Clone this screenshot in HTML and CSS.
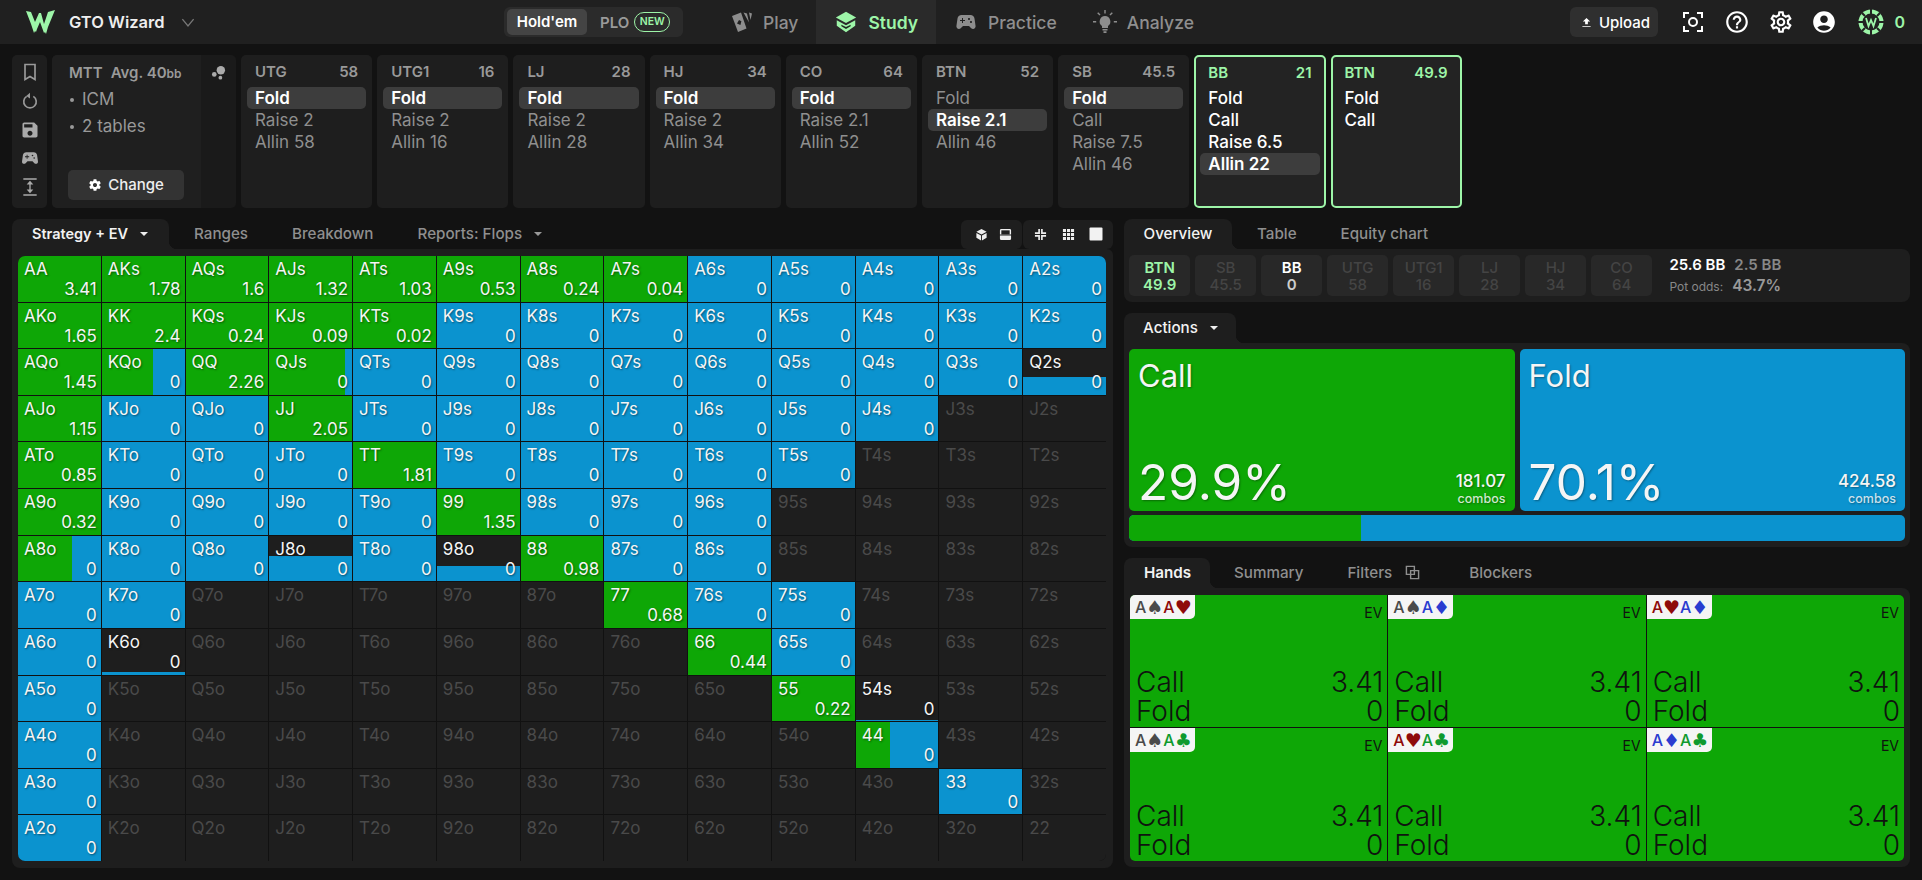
FILE: index.html
```html
<!DOCTYPE html>
<html lang="en">
<head>
<meta charset="utf-8">
<title>GTO Wizard</title>
<link rel="stylesheet" href="styles.css">
</head>
<body>
<header class="topbar">
  <div class="brand">
    <svg class="logo" viewBox="0 0 30 24"><path fill="#9df5a8" d="M0 1l5 1 4 10 4-9 2 0 3 11 4-12 7-2-7 17-2 7-1-2-1 1-4-11-3 7-1 3-1-1-1 2-3-9z"/></svg>
    <span class="brand-name">GTO Wizard</span>
    <svg class="chev" viewBox="0 0 12 8"><path fill="none" stroke="#777" stroke-width="1.2" d="M1 1l5 6 5-6"/></svg>
  </div>
  <div class="switch">
    <span class="switch-on">Hold'em</span>
    <span class="switch-off">PLO</span>
    <span class="new">NEW</span>
  </div>
  <nav class="nav">
    <a class="nav-item">
      <svg class="nav-ico" viewBox="0 0 24 24"><path fill="#8d8d8d" d="M3 6l9-3.500 5.500 16L9 22zM10 10l-2 3.500 3.400 1.500 1-3.800z"/><path fill="#8d8d8d" d="M14.500 2.500l3.500 1 2 9zM20 2.500l3 1-1.500 6.500z"/></svg>
      Play
    </a>
    <a class="nav-item nav-active">
      <svg class="nav-ico" viewBox="0 0 26 24"><path fill="#9df5a8" d="M13 1l11 6-11 6L2 7z"/><path fill="#9df5a8" d="M3 10l10 5.500L23 10v6l-10 7-10-7z"/><path fill="#1f2a20" d="M13 17.500l5-2.500v1.500l-5 3-5-3V15z"/></svg>
      Study
    </a>
    <a class="nav-item">
      <svg class="nav-ico" viewBox="0 0 24 24"><path fill="#8d8d8d" d="M21.580 16.090l-1.090-7.660C20.210 6.460 18.520 5 16.530 5H7.470C5.480 5 3.790 6.460 3.510 8.430l-1.090 7.660C2.200 17.630 3.390 19 4.940 19c.68 0 1.320-.27 1.800-.75L9 16h6l2.250 2.250c.48.48 1.130.75 1.800.75 1.560 0 2.750-1.370 2.530-2.910zM11 11H9v2H8v-2H6v-1h2V8h1v2h2v1zm4-1c-.55 0-1-.45-1-1s.45-1 1-1 1 .45 1 1-.45 1-1 1zm2 3c-.55 0-1-.45-1-1s.45-1 1-1 1 .45 1 1-.45 1-1 1z"/></svg>
      Practice
    </a>
    <a class="nav-item">
      <svg class="nav-ico" viewBox="0 0 24 24"><path fill="#8d8d8d" d="M12 6a5.500 5.500 0 0 0-3 10v2h6v-2a5.500 5.500 0 0 0-3-10zM9.500 19h5v1.500h-5zM10.500 21.200h3V23h-3zM11.300 0h1.400v3.500h-1.400zM0 11h3.200v1.400H0zM20.800 11H24v1.400h-3.200zM4.200 3.200l1-1 2.300 2.400-1 1zM19.800 3.200l-1-1-2.300 2.400 1 1z"/></svg>
      Analyze
    </a>
  </nav>
  <div class="tools">
    <button class="upload">
      <svg class="upload-ico" viewBox="0 0 12 12"><path fill="#fff" d="M6 1l4 4H7.500v3h-3V5H2zM1.500 10h9v1h-9z"/></svg>
      Upload
    </button>
    <svg class="tool-ico scan" viewBox="0 0 24 24"><path fill="none" stroke="#fff" stroke-width="2" d="M8 3H3v5M16 3h5v5M8 21H3v-5M16 21h5v-5"/><circle cx="12" cy="12" r="4" fill="none" stroke="#fff" stroke-width="2"/></svg>
    <svg class="tool-ico help" viewBox="0 0 24 24"><path fill="#fff" d="M11 18h2v-2h-2v2zm1-16C6.480 2 2 6.480 2 12s4.480 10 10 10 10-4.480 10-10S17.520 2 12 2zm0 18c-4.410 0-8-3.590-8-8s3.590-8 8-8 8 3.590 8 8-3.590 8-8 8zm0-14c-2.210 0-4 1.790-4 4h2c0-1.100.9-2 2-2s2 .9 2 2c0 2-3 1.750-3 5h2c0-2.250 3-2.500 3-5 0-2.210-1.790-4-4-4z"/></svg>
    <svg class="tool-ico gear" viewBox="0 0 24 24"><path fill="#fff" d="M19.430 12.980c.04-.32.07-.64.07-.98 0-.34-.03-.66-.07-.98l2.110-1.650c.19-.15.24-.42.12-.64l-2-3.460c-.09-.16-.26-.25-.44-.25-.06 0-.12.01-.17.03l-2.490 1c-.52-.4-1.080-.73-1.690-.98l-.38-2.650C14.460 2.180 14.250 2 14 2h-4c-.25 0-.46.18-.49.42l-.38 2.650c-.61.25-1.170.59-1.690.98l-2.490-1c-.06-.02-.12-.03-.18-.03-.17 0-.34.09-.43.25l-2 3.460c-.13.22-.07.49.12.64l2.110 1.650c-.04.32-.07.65-.07.98 0 .33.03.66.07.98l-2.110 1.650c-.19.15-.24.42-.12.64l2 3.460c.09.16.26.25.44.25.06 0 .12-.01.17-.03l2.490-1c.52.4 1.080.73 1.690.98l.38 2.650c.03.24.24.42.49.42h4c.25 0 .46-.18.49-.42l.38-2.650c.61-.25 1.170-.59 1.690-.98l2.490 1c.06.02.12.03.18.03.17 0 .34-.09.43-.25l2-3.460c.12-.22.07-.49-.12-.64l-2.110-1.650zm-1.980-1.710c.04.31.05.52.05.73 0 .21-.02.43-.05.73l-.14 1.130.89.7 1.080.84-.7 1.210-1.270-.51-1.040-.42-.9.68c-.43.32-.84.56-1.250.73l-1.060.43-.16 1.130-.2 1.350h-1.400l-.19-1.350-.16-1.130-1.060-.43c-.43-.18-.83-.41-1.230-.71l-.91-.7-1.060.43-1.270.51-.7-1.210 1.080-.84.89-.7-.14-1.130c-.03-.31-.05-.54-.05-.74s.02-.43.05-.73l.14-1.130-.89-.7-1.080-.84.7-1.210 1.270.51 1.040.42.9-.68c.43-.32.84-.56 1.250-.73l1.060-.43.16-1.130.2-1.350h1.390l.19 1.350.16 1.130 1.060.43c.43.18.83.41 1.230.71l.91.7 1.060-.43 1.270-.51.7 1.210-1.070.85-.89.7.14 1.130zM12 8c-2.210 0-4 1.790-4 4s1.790 4 4 4 4-1.790 4-4-1.790-4-4-4zm0 6c-1.100 0-2-.9-2-2s.9-2 2-2 2 .9 2 2-.9 2-2 2z"/></svg>
    <svg class="tool-ico user" viewBox="0 0 24 24"><path fill="#fff" d="M12 2C6.480 2 2 6.480 2 12s4.480 10 10 10 10-4.480 10-10S17.520 2 12 2zm0 4c1.930 0 3.500 1.570 3.500 3.500S13.930 13 12 13s-3.500-1.570-3.500-3.500S10.070 6 12 6zm0 14c-2.030 0-4.430-.82-6.140-2.880C7.550 15.800 9.680 15 12 15s4.450.8 6.140 2.120C16.430 19.180 14.030 20 12 20z"/></svg>
    <svg class="chip" viewBox="0 0 26 26"><circle cx="13" cy="13" r="12.500" fill="#9df5a8"/><circle cx="13" cy="13" r="8.500" fill="#222"/><path fill="none" stroke="#222" stroke-width="2" d="M13 0v5M13 21v5M0 13h5M21 13h5M4 4l3 3M19 19l3 3M22 4l-3 3M4 22l3-3"/><path fill="none" stroke="#9df5a8" stroke-width="1.800" d="M8 9l2.500 8L13 11l2.500 6L18 9"/></svg>
    <span class="coins">0</span>
  </div>
</header>

<section class="strip">
  <aside class="side">
    <svg class="side-ico" viewBox="0 0 24 24"><path fill="none" stroke="#999" stroke-width="2" d="M6 3h12v18l-6-3.500L6 21z"/></svg>
    <svg class="side-ico" viewBox="0 0 24 24"><path fill="none" stroke="#999" stroke-width="2" d="M8 6.500a7.500 7.500 0 1 0 8 0"/><path fill="#999" d="M12 2v7L7.500 6z"/></svg>
    <svg class="side-ico" viewBox="0 0 24 24"><path fill="#aaa" d="M17 3H5c-1.110 0-2 .9-2 2v14c0 1.100.89 2 2 2h14c1.100 0 2-.9 2-2V7l-4-4zm-5 16c-1.660 0-3-1.340-3-3s1.340-3 3-3 3 1.340 3 3-1.340 3-3 3zm3-10H5V5h10v4z"/></svg>
    <svg class="side-ico" viewBox="0 0 24 24"><path fill="#aaa" d="M21.580 16.090l-1.090-7.660C20.210 6.460 18.520 5 16.530 5H7.470C5.480 5 3.790 6.460 3.510 8.430l-1.090 7.660C2.200 17.630 3.390 19 4.940 19c.68 0 1.320-.27 1.800-.75L9 16h6l2.250 2.250c.48.48 1.130.75 1.800.75 1.560 0 2.750-1.370 2.530-2.910zM11 11H9v2H8v-2H6v-1h2V8h1v2h2v1zm4-1c-.55 0-1-.45-1-1s.45-1 1-1 1 .45 1 1-.45 1-1 1zm2 3c-.55 0-1-.45-1-1s.45-1 1-1 1 .45 1 1-.45 1-1 1z"/></svg>
    <svg class="side-ico" viewBox="0 0 24 24"><path fill="#aaa" d="M4 1.500h16v1.800H4zM4 20.700h16v1.800H4zM11.200 9H8l4-4.500L16 9h-3.200v6H16l-4 4.500L8 15h3.200z"/></svg>
  </aside>
  <div class="format">
    <div class="format-main">
      <div class="format-title"><span>MTT</span><span>Avg. 40<small>bb</small></span></div>
      <ul class="format-list"><li>ICM</li><li>2 tables</li></ul>
      <button class="change">
        <svg class="change-ico" viewBox="0 0 24 24"><path fill="#fff" d="M19.430 12.980c.04-.32.07-.64.07-.98s-.03-.66-.07-.98l2.110-1.650c.19-.15.24-.42.12-.64l-2-3.460c-.12-.22-.39-.3-.61-.22l-2.490 1c-.52-.4-1.080-.73-1.690-.98l-.38-2.650A.49.49 0 0 0 14 2h-4c-.25 0-.46.18-.49.42l-.38 2.650c-.61.25-1.170.59-1.690.98l-2.490-1c-.23-.09-.49 0-.61.22l-2 3.460c-.13.22-.07.49.12.64l2.110 1.650c-.04.32-.07.65-.07.98s.03.66.07.98l-2.110 1.650c-.19.15-.24.42-.12.64l2 3.460c.12.22.39.3.61.22l2.490-1c.52.4 1.080.73 1.690.98l.38 2.650c.03.24.24.42.49.42h4c.25 0 .46-.18.49-.42l.38-2.650c.61-.25 1.170-.59 1.690-.98l2.490 1c.23.09.49 0 .61-.22l2-3.460c.12-.22.07-.49-.12-.64l-2.110-1.650zM12 15.500c-1.930 0-3.500-1.570-3.500-3.500s1.570-3.500 3.500-3.500 3.500 1.570 3.500 3.500-1.570 3.500-3.500 3.500z"/></svg>
        Change
      </button>
    </div>
    <div class="format-extra">
      <svg class="dots" viewBox="0 0 16 16"><circle cx="10.500" cy="5.500" r="4.500" fill="#aaa"/><circle cx="3.500" cy="10" r="2.500" fill="#aaa"/><circle cx="10" cy="13.500" r="2" fill="#aaa"/></svg>
    </div>
  </div>
  <div class="pos"><div class="pos-head"><span>UTG</span><span>58</span></div><div class="opt sel">Fold</div><div class="opt">Raise 2</div><div class="opt">Allin 58</div></div>
  <div class="pos"><div class="pos-head"><span>UTG1</span><span>16</span></div><div class="opt sel">Fold</div><div class="opt">Raise 2</div><div class="opt">Allin 16</div></div>
  <div class="pos"><div class="pos-head"><span>LJ</span><span>28</span></div><div class="opt sel">Fold</div><div class="opt">Raise 2</div><div class="opt">Allin 28</div></div>
  <div class="pos"><div class="pos-head"><span>HJ</span><span>34</span></div><div class="opt sel">Fold</div><div class="opt">Raise 2</div><div class="opt">Allin 34</div></div>
  <div class="pos"><div class="pos-head"><span>CO</span><span>64</span></div><div class="opt sel">Fold</div><div class="opt">Raise 2.1</div><div class="opt">Allin 52</div></div>
  <div class="pos"><div class="pos-head"><span>BTN</span><span>52</span></div><div class="opt">Fold</div><div class="opt sel">Raise 2.1</div><div class="opt">Allin 46</div></div>
  <div class="pos"><div class="pos-head"><span>SB</span><span>45.5</span></div><div class="opt sel">Fold</div><div class="opt">Call</div><div class="opt">Raise 7.5</div><div class="opt">Allin 46</div></div>
  <div class="pos pos-live"><div class="pos-head"><span>BB</span><span>21</span></div><div class="opt">Fold</div><div class="opt">Call</div><div class="opt">Raise 6.5</div><div class="opt sel">Allin 22</div></div>
  <div class="pos pos-live"><div class="pos-head"><span>BTN</span><span>49.9</span></div><div class="opt">Fold</div><div class="opt">Call</div></div>
</section>

<main class="main">
  <section class="left">
    <div class="tabs">
      <span class="tab tab-on tab-strategy">Strategy + EV <i class="caret"></i></span>
      <span class="tab">Ranges</span>
      <span class="tab">Breakdown</span>
      <span class="tab">Reports: Flops <i class="caret caret-dim"></i></span>
      <div class="views">
        <div class="view-group">
          <svg class="view-ico" viewBox="0 0 14 14"><path fill="#eee" d="M7 1l5.500 3L7 7 1.500 4zM1.500 5.300L6.500 8v5.500l-5-3zM12.500 5.300L7.500 8v5.500l5-3z"/></svg>
          <svg class="view-ico" viewBox="0 0 14 14"><path fill="#eee" d="M2.500 1h9A1.500 1.500 0 0 1 13 2.500V7H1V2.500A1.500 1.500 0 0 1 2.500 1zM1 8h12v3.500a1.500 1.500 0 0 1-1.500 1.500h-9A1.500 1.500 0 0 1 1 11.500z"/><path fill="#1e1e1e" d="M2.500 2.500h9V7h-9z"/></svg>
        </div>
        <div class="view-group view-group-b">
          <svg class="view-ico" viewBox="0 0 14 14"><path fill="none" stroke="#eee" stroke-width="1.800" d="M5.500 1v4.500H1M8.500 1v4.500H13M5.500 13V8.500H1M8.500 13V8.500H13"/></svg>
          <svg class="view-ico" viewBox="0 0 14 14"><path fill="#eee" d="M1 1h3.300v3.300H1zM5.400 1h3.300v3.300H5.400zM9.700 1H13v3.300H9.700zM1 5.400h3.300v3.300H1zM5.400 5.400h3.300v3.300H5.400zM9.700 5.400H13v3.300H9.700zM1 9.700h3.300V13H1zM5.400 9.700h3.300V13H5.400zM9.700 9.700H13V13H9.700z"/></svg>
          <svg class="view-ico view-square" viewBox="0 0 14 14"><rect x="0.500" y="0.500" width="13" height="13" rx="1" fill="#f2f2f2"/></svg>
        </div>
      </div>
    </div>
    <div class="matrix-panel">
      <div class="matrix">
        <div class="c g"><span class="l">AA</span><span class="v">3.41</span></div><div class="c g"><span class="l">AKs</span><span class="v">1.78</span></div><div class="c g"><span class="l">AQs</span><span class="v">1.6</span></div><div class="c g"><span class="l">AJs</span><span class="v">1.32</span></div><div class="c g"><span class="l">ATs</span><span class="v">1.03</span></div><div class="c g"><span class="l">A9s</span><span class="v">0.53</span></div><div class="c g"><span class="l">A8s</span><span class="v">0.24</span></div><div class="c g"><span class="l">A7s</span><span class="v">0.04</span></div><div class="c b"><span class="l">A6s</span><span class="v">0</span></div><div class="c b"><span class="l">A5s</span><span class="v">0</span></div><div class="c b"><span class="l">A4s</span><span class="v">0</span></div><div class="c b"><span class="l">A3s</span><span class="v">0</span></div><div class="c b"><span class="l">A2s</span><span class="v">0</span></div>
        <div class="c g"><span class="l">AKo</span><span class="v">1.65</span></div><div class="c g"><span class="l">KK</span><span class="v">2.4</span></div><div class="c g"><span class="l">KQs</span><span class="v">0.24</span></div><div class="c g"><span class="l">KJs</span><span class="v">0.09</span></div><div class="c g"><span class="l">KTs</span><span class="v">0.02</span></div><div class="c b"><span class="l">K9s</span><span class="v">0</span></div><div class="c b"><span class="l">K8s</span><span class="v">0</span></div><div class="c b"><span class="l">K7s</span><span class="v">0</span></div><div class="c b"><span class="l">K6s</span><span class="v">0</span></div><div class="c b"><span class="l">K5s</span><span class="v">0</span></div><div class="c b"><span class="l">K4s</span><span class="v">0</span></div><div class="c b"><span class="l">K3s</span><span class="v">0</span></div><div class="c b"><span class="l">K2s</span><span class="v">0</span></div>
        <div class="c g"><span class="l">AQo</span><span class="v">1.45</span></div><div class="c b"><span class="fill-g" style="width:62%"></span><span class="l">KQo</span><span class="v">0</span></div><div class="c g"><span class="l">QQ</span><span class="v">2.26</span></div><div class="c b"><span class="fill-g" style="width:91%"></span><span class="l">QJs</span><span class="v">0</span></div><div class="c b"><span class="l">QTs</span><span class="v">0</span></div><div class="c b"><span class="l">Q9s</span><span class="v">0</span></div><div class="c b"><span class="l">Q8s</span><span class="v">0</span></div><div class="c b"><span class="l">Q7s</span><span class="v">0</span></div><div class="c b"><span class="l">Q6s</span><span class="v">0</span></div><div class="c b"><span class="l">Q5s</span><span class="v">0</span></div><div class="c b"><span class="l">Q4s</span><span class="v">0</span></div><div class="c b"><span class="l">Q3s</span><span class="v">0</span></div><div class="c m"><span class="fill-b" style="height:40%"></span><span class="l">Q2s</span><span class="v">0</span></div>
        <div class="c g"><span class="l">AJo</span><span class="v">1.15</span></div><div class="c b"><span class="l">KJo</span><span class="v">0</span></div><div class="c b"><span class="l">QJo</span><span class="v">0</span></div><div class="c g"><span class="l">JJ</span><span class="v">2.05</span></div><div class="c b"><span class="l">JTs</span><span class="v">0</span></div><div class="c b"><span class="l">J9s</span><span class="v">0</span></div><div class="c b"><span class="l">J8s</span><span class="v">0</span></div><div class="c b"><span class="l">J7s</span><span class="v">0</span></div><div class="c b"><span class="l">J6s</span><span class="v">0</span></div><div class="c b"><span class="l">J5s</span><span class="v">0</span></div><div class="c b"><span class="l">J4s</span><span class="v">0</span></div><div class="c"><span class="l">J3s</span></div><div class="c"><span class="l">J2s</span></div>
        <div class="c g"><span class="l">ATo</span><span class="v">0.85</span></div><div class="c b"><span class="l">KTo</span><span class="v">0</span></div><div class="c b"><span class="l">QTo</span><span class="v">0</span></div><div class="c b"><span class="l">JTo</span><span class="v">0</span></div><div class="c g"><span class="l">TT</span><span class="v">1.81</span></div><div class="c b"><span class="l">T9s</span><span class="v">0</span></div><div class="c b"><span class="l">T8s</span><span class="v">0</span></div><div class="c b"><span class="l">T7s</span><span class="v">0</span></div><div class="c b"><span class="l">T6s</span><span class="v">0</span></div><div class="c b"><span class="l">T5s</span><span class="v">0</span></div><div class="c"><span class="l">T4s</span></div><div class="c"><span class="l">T3s</span></div><div class="c"><span class="l">T2s</span></div>
        <div class="c g"><span class="l">A9o</span><span class="v">0.32</span></div><div class="c b"><span class="l">K9o</span><span class="v">0</span></div><div class="c b"><span class="l">Q9o</span><span class="v">0</span></div><div class="c b"><span class="l">J9o</span><span class="v">0</span></div><div class="c b"><span class="l">T9o</span><span class="v">0</span></div><div class="c g"><span class="l">99</span><span class="v">1.35</span></div><div class="c b"><span class="l">98s</span><span class="v">0</span></div><div class="c b"><span class="l">97s</span><span class="v">0</span></div><div class="c b"><span class="l">96s</span><span class="v">0</span></div><div class="c"><span class="l">95s</span></div><div class="c"><span class="l">94s</span></div><div class="c"><span class="l">93s</span></div><div class="c"><span class="l">92s</span></div>
        <div class="c b"><span class="fill-g" style="width:65%"></span><span class="l">A8o</span><span class="v">0</span></div><div class="c b"><span class="l">K8o</span><span class="v">0</span></div><div class="c b"><span class="l">Q8o</span><span class="v">0</span></div><div class="c m"><span class="fill-b" style="height:56%"></span><span class="l">J8o</span><span class="v">0</span></div><div class="c b"><span class="l">T8o</span><span class="v">0</span></div><div class="c m"><span class="fill-b" style="height:33%"></span><span class="l">98o</span><span class="v">0</span></div><div class="c g"><span class="l">88</span><span class="v">0.98</span></div><div class="c b"><span class="l">87s</span><span class="v">0</span></div><div class="c b"><span class="l">86s</span><span class="v">0</span></div><div class="c"><span class="l">85s</span></div><div class="c"><span class="l">84s</span></div><div class="c"><span class="l">83s</span></div><div class="c"><span class="l">82s</span></div>
        <div class="c b"><span class="l">A7o</span><span class="v">0</span></div><div class="c b"><span class="l">K7o</span><span class="v">0</span></div><div class="c"><span class="l">Q7o</span></div><div class="c"><span class="l">J7o</span></div><div class="c"><span class="l">T7o</span></div><div class="c"><span class="l">97o</span></div><div class="c"><span class="l">87o</span></div><div class="c g"><span class="l">77</span><span class="v">0.68</span></div><div class="c b"><span class="l">76s</span><span class="v">0</span></div><div class="c b"><span class="l">75s</span><span class="v">0</span></div><div class="c"><span class="l">74s</span></div><div class="c"><span class="l">73s</span></div><div class="c"><span class="l">72s</span></div>
        <div class="c b"><span class="l">A6o</span><span class="v">0</span></div><div class="c m"><span class="fill-b" style="height:6%"></span><span class="l">K6o</span><span class="v">0</span></div><div class="c"><span class="l">Q6o</span></div><div class="c"><span class="l">J6o</span></div><div class="c"><span class="l">T6o</span></div><div class="c"><span class="l">96o</span></div><div class="c"><span class="l">86o</span></div><div class="c"><span class="l">76o</span></div><div class="c g"><span class="l">66</span><span class="v">0.44</span></div><div class="c b"><span class="l">65s</span><span class="v">0</span></div><div class="c"><span class="l">64s</span></div><div class="c"><span class="l">63s</span></div><div class="c"><span class="l">62s</span></div>
        <div class="c b"><span class="l">A5o</span><span class="v">0</span></div><div class="c"><span class="l">K5o</span></div><div class="c"><span class="l">Q5o</span></div><div class="c"><span class="l">J5o</span></div><div class="c"><span class="l">T5o</span></div><div class="c"><span class="l">95o</span></div><div class="c"><span class="l">85o</span></div><div class="c"><span class="l">75o</span></div><div class="c"><span class="l">65o</span></div><div class="c g"><span class="l">55</span><span class="v">0.22</span></div><div class="c m"><span class="fill-b" style="height:3%"></span><span class="l">54s</span><span class="v">0</span></div><div class="c"><span class="l">53s</span></div><div class="c"><span class="l">52s</span></div>
        <div class="c b"><span class="l">A4o</span><span class="v">0</span></div><div class="c"><span class="l">K4o</span></div><div class="c"><span class="l">Q4o</span></div><div class="c"><span class="l">J4o</span></div><div class="c"><span class="l">T4o</span></div><div class="c"><span class="l">94o</span></div><div class="c"><span class="l">84o</span></div><div class="c"><span class="l">74o</span></div><div class="c"><span class="l">64o</span></div><div class="c"><span class="l">54o</span></div><div class="c b"><span class="fill-g" style="width:42%"></span><span class="l">44</span><span class="v">0</span></div><div class="c"><span class="l">43s</span></div><div class="c"><span class="l">42s</span></div>
        <div class="c b"><span class="l">A3o</span><span class="v">0</span></div><div class="c"><span class="l">K3o</span></div><div class="c"><span class="l">Q3o</span></div><div class="c"><span class="l">J3o</span></div><div class="c"><span class="l">T3o</span></div><div class="c"><span class="l">93o</span></div><div class="c"><span class="l">83o</span></div><div class="c"><span class="l">73o</span></div><div class="c"><span class="l">63o</span></div><div class="c"><span class="l">53o</span></div><div class="c"><span class="l">43o</span></div><div class="c b"><span class="l">33</span><span class="v">0</span></div><div class="c"><span class="l">32s</span></div>
        <div class="c b"><span class="l">A2o</span><span class="v">0</span></div><div class="c"><span class="l">K2o</span></div><div class="c"><span class="l">Q2o</span></div><div class="c"><span class="l">J2o</span></div><div class="c"><span class="l">T2o</span></div><div class="c"><span class="l">92o</span></div><div class="c"><span class="l">82o</span></div><div class="c"><span class="l">72o</span></div><div class="c"><span class="l">62o</span></div><div class="c"><span class="l">52o</span></div><div class="c"><span class="l">42o</span></div><div class="c"><span class="l">32o</span></div><div class="c"><span class="l">22</span></div>
      </div>
    </div>
  </section>

  <section class="right">
    <div class="tabs">
      <span class="tab tab-on tab-overview">Overview</span>
      <span class="tab">Table</span>
      <span class="tab">Equity chart</span>
    </div>
    <div class="seats">
      <div class="seat seat-live"><span>BTN</span><span>49.9</span></div>
      <div class="seat"><span>SB</span><span>45.5</span></div>
      <div class="seat seat-bb"><span>BB</span><span>0</span></div>
      <div class="seat"><span>UTG</span><span>58</span></div>
      <div class="seat"><span>UTG1</span><span>16</span></div>
      <div class="seat"><span>LJ</span><span>28</span></div>
      <div class="seat"><span>HJ</span><span>34</span></div>
      <div class="seat"><span>CO</span><span>64</span></div>
      <div class="pot">
        <div class="pot-top"><b>25.6 BB</b><span>2.5 BB</span></div>
        <div class="pot-odds"><span>Pot odds:</span><b>43.7%</b></div>
      </div>
    </div>
    <div class="tabs tabs-gap">
      <span class="tab tab-on tab-actions">Actions <i class="caret"></i></span>
    </div>
    <div class="actions">
      <div class="action-row">
        <div class="action a-call">
          <div class="a-name">Call</div>
          <div class="a-foot"><span class="a-pct">29.9%</span><span class="a-combos"><b>181.07</b><small>combos</small></span></div>
        </div>
        <div class="action a-fold">
          <div class="a-name">Fold</div>
          <div class="a-foot"><span class="a-pct">70.1%</span><span class="a-combos"><b>424.58</b><small>combos</small></span></div>
        </div>
      </div>
      <div class="split"><span class="split-g" style="width:29.9%"></span></div>
    </div>
    <div class="tabs tabs-gap">
      <span class="tab tab-on tab-hands">Hands</span>
      <span class="tab">Summary</span>
      <span class="tab tab-filters">Filters<svg class="filter-ico" viewBox="0 0 16 16"><path fill="none" stroke="#8f8f8f" stroke-width="1.500" d="M1.500 1.500h8.500v8.500H1.500zM6 6h8.500v8.500H6z"/></svg></span>
      <span class="tab">Blockers</span>
    </div>
    <div class="hands-panel">
      <div class="hands">
        <div class="hand">
          <div class="hand-top"><div class="tag"><span class="s">A<i class="suit">♠</i></span><span class="h">A<i class="suit">♥</i></span></div><span class="ev">EV</span></div>
          <div class="hand-row"><span>Call</span><span>3.41</span></div><div class="hand-row"><span>Fold</span><span>0</span></div>
        </div>
        <div class="hand">
          <div class="hand-top"><div class="tag"><span class="s">A<i class="suit">♠</i></span><span class="d">A<i class="suit">♦</i></span></div><span class="ev">EV</span></div>
          <div class="hand-row"><span>Call</span><span>3.41</span></div><div class="hand-row"><span>Fold</span><span>0</span></div>
        </div>
        <div class="hand">
          <div class="hand-top"><div class="tag"><span class="h">A<i class="suit">♥</i></span><span class="d">A<i class="suit">♦</i></span></div><span class="ev">EV</span></div>
          <div class="hand-row"><span>Call</span><span>3.41</span></div><div class="hand-row"><span>Fold</span><span>0</span></div>
        </div>
        <div class="hand">
          <div class="hand-top"><div class="tag"><span class="s">A<i class="suit">♠</i></span><span class="k">A<i class="suit">♣</i></span></div><span class="ev">EV</span></div>
          <div class="hand-row"><span>Call</span><span>3.41</span></div><div class="hand-row"><span>Fold</span><span>0</span></div>
        </div>
        <div class="hand">
          <div class="hand-top"><div class="tag"><span class="h">A<i class="suit">♥</i></span><span class="k">A<i class="suit">♣</i></span></div><span class="ev">EV</span></div>
          <div class="hand-row"><span>Call</span><span>3.41</span></div><div class="hand-row"><span>Fold</span><span>0</span></div>
        </div>
        <div class="hand">
          <div class="hand-top"><div class="tag"><span class="d">A<i class="suit">♦</i></span><span class="k">A<i class="suit">♣</i></span></div><span class="ev">EV</span></div>
          <div class="hand-row"><span>Call</span><span>3.41</span></div><div class="hand-row"><span>Fold</span><span>0</span></div>
        </div>
      </div>
    </div>
  </section>
</main>
</body>
</html>
```

FILE: styles.css
```css
* { box-sizing: border-box; }
html, body { margin: 0; height: 100%; }
body {
  background: #121212;
  color: #fff;
  font-family: Inter, "Noto Sans", sans-serif;
  overflow: hidden;
  width: 1922px;
  height: 880px;
}
button { font: inherit; border: 0; color: inherit; }

/* top bar */
.topbar { display: flex; align-items: center; height: 44px; padding-right: 17px; background: #202020; }
.brand { display: flex; align-items: center; width: 504px; padding-left: 26px; }
.logo { width: 30px; height: 24px; }
.brand-name { margin-left: 13px; font-size: 16.500px; font-weight: 600; color: #eee; }
.chev { width: 14px; height: 9px; margin-left: 16px; }
.switch { display: flex; align-items: center; width: 179px; height: 30px; padding: 0 3px; background: #2b2b2b; border-radius: 6px; font-size: 15px; font-weight: 600; }
.switch-on { width: 80px; height: 26px; line-height: 26px; text-align: center; background: #444; border-radius: 5px; color: #fff; }
.switch-off { margin-left: 13px; color: #9a9a9a; }
.new { margin-left: 5px; width: 36px; height: 20px; line-height: 18px; text-align: center; border: 1px solid #9df5a8; border-radius: 10px; color: #9df5a8; font-size: 10.500px; }
.nav { display: flex; height: 44px; margin-left: 28px; }
.nav-item { display: flex; align-items: center; gap: 10px; padding: 0 18px; font-size: 17.500px; font-weight: 500; color: #8f8f8f; }
.nav-active { background: #2a2a2a; color: #9df5a8; font-weight: 600; }
.nav-ico { width: 24px; height: 24px; }
.tools { display: flex; align-items: center; margin-left: auto; }
.upload { display: flex; align-items: center; gap: 7px; width: 88px; height: 30px; padding-left: 11px; background: #2f2f2f; border-radius: 6px; font-size: 15px; font-weight: 500; }
.upload-ico { width: 11px; height: 11px; }
.tool-ico { width: 24px; height: 24px; }
.scan { margin-left: 23px; }
.help { margin-left: 19px; width: 26px; height: 26px; }
.gear { margin-left: 18px; width: 26px; height: 26px; }
.user { margin-left: 17px; width: 26px; height: 26px; }
.chip { width: 26px; height: 26px; margin-left: 21.500px; }
.coins { margin-left: 10px; font-size: 16px; font-weight: 600; color: #9df5a8; }

/* action strip */
.strip { display: flex; gap: 5px; height: 153px; margin: 11px 0 0 12px; }
.side { display: flex; flex-direction: column; justify-content: space-between; align-items: center; width: 35px; padding: 7px 0 11px; background: #1e1e1e; border-radius: 5px; }
.side-ico { width: 20px; height: 20px; }
.format { display: flex; width: 184px; background: #1a1a1a; border-radius: 5px; overflow: hidden; }
.format-main { position: relative; display: flex; flex-direction: column; width: 149px; padding-left: 17px; background: #1f1f1f; }
.format-title { display: flex; gap: 8px; margin-top: 9px; font-size: 15px; line-height: 17px; font-weight: 600; color: #9a9a9a; white-space: nowrap; }
.format-title small { font-size: 12px; }
.format-list { list-style: none; margin: 4px 0 0; padding: 0; font-size: 17px; color: #999; }
.format-list li { height: 27px; line-height: 27px; padding-left: 13px; position: relative; }
.format-list li::before { content: ""; position: absolute; left: 1px; top: 12px; width: 4px; height: 4px; border-radius: 50%; background: #999; }
.change { display: flex; align-items: center; justify-content: center; gap: 6px; width: 116px; height: 30px; margin: auto 0 8px -1px; background: #333; border-radius: 5px; font-size: 15px; font-weight: 500; color: #eee; padding: 0 0 1px; }
.change-ico { width: 14px; height: 14px; }
.format-extra { flex: 1; display: flex; justify-content: center; padding-top: 10px; }
.dots { width: 15px; height: 15px; }
.pos { width: 131.200px; padding: 0 6px; background: #1e1e1e; border-radius: 5px; font-size: 17px; color: #8f8f8f; }
.pos-head { display: flex; justify-content: space-between; height: 32px; line-height: 34px; padding: 0 8px; font-size: 15px; font-weight: 600; color: #999; }
.opt { height: 22px; line-height: 22px; padding: 0 8px; border-radius: 5px; }
.opt.sel { background: #3d3d3d; color: #fff; font-weight: 600; }
.pos-live { background: #232323; border: 2px solid #9df5a8; color: #fff; font-weight: 500; padding: 0 4px; }
.pos-live .pos-head { color: #9df5a8; height: 30px; line-height: 32px; }

/* main */
.main { display: flex; margin: 11px 0 0 12px; }
.left { width: 1101px; }
.right { width: 786px; margin-left: 11px; }
.tabs { position: relative; display: flex; height: 30px; align-items: center; }
.tabs-gap { margin-top: 11px; }
.tab { position: relative; height: 30px; line-height: 30px; padding: 0 22px; font-size: 15.200px; font-weight: 500; color: #8f8f8f; white-space: nowrap; }
.tab-on { background: #1e1e1e; border-radius: 8px 8px 0 0; color: #f2f2f2; }
.tab-on::after { content: ""; position: absolute; right: -8px; bottom: 0; width: 8px; height: 8px; background: radial-gradient(circle at 100% 0, transparent 8px, #1e1e1e 8.500px); }
.tab-strategy { width: 157px; padding: 0 0 0 20px; font-size: 14.500px; font-weight: 600; margin-right: 3px; }
.tab-overview { width: 108px; padding: 0 0 0 19.500px; margin-right: 3px; }
.tab-actions { width: 112px; padding: 0 0 0 19px; }
.tab-hands { width: 86px; padding: 0 0 0 20px; font-weight: 600; margin-right: 2px; }
.tab-filters { padding-right: 27px; }
.caret { display: inline-block; margin: 0 0 2px 8px; border: 4.500px solid transparent; border-top-color: #eee; border-bottom: 0; vertical-align: middle; }
.caret-dim { border-top-color: #999; }
.filter-ico { width: 15px; height: 15px; margin-left: 13px; vertical-align: -2px; }
.views { display: flex; gap: 1px; margin-left: auto; }
.view-group { display: flex; align-items: center; justify-content: space-between; width: 61px; height: 29px; padding: 0 10px 0 14px; background: #1e1e1e; border-radius: 6px; }
.view-group-b { width: 90px; padding: 0 10px 0 11px; }
.view-ico { width: 13px; height: 13px; }
.view-square { width: 14px; height: 14px; }

/* matrix */
.matrix-panel { height: 619px; padding: 7px 7px 7px 6px; background: #1e1e1e; border-radius: 0 6px 8px 8px; }
.matrix { display: grid; grid-template-columns: repeat(13, 1fr); grid-template-rows: repeat(13, 1fr); gap: 1px; height: 605px; background: #111; border-radius: 7px; overflow: hidden; }
.c { position: relative; display: flex; flex-direction: column; background: #1e1e1e; padding-top: 3px; font-size: 17px; line-height: 21px; color: #4a4a4a; overflow: hidden; }
.l, .v { position: relative; }
.l { padding-left: 6px; }
.v { align-self: flex-end; padding-right: 4px; margin-top: -1px; }
.g, .b, .m { color: #f5f5f5; text-shadow: 1px 1px 2px rgba(0, 0, 0, .45); }
.g { background: #0ea706; }
.b { background: #0b93cf; }
.m { background: #1e1e1e; }
.fill-g, .fill-b { position: absolute; left: 0; }
.fill-g { top: 0; bottom: 0; background: #0ea706; }
.fill-b { right: 0; bottom: 0; background: #0b93cf; }

/* overview */
.seats { display: flex; align-items: center; gap: 4.600px; height: 53px; padding-left: 5px; background: #1e1e1e; border-radius: 0 8px 8px 8px; }
.seat { display: flex; flex-direction: column; align-items: center; justify-content: center; width: 61.400px; height: 41px; background: #282828; border-radius: 5px; font-size: 15px; line-height: 17px; font-weight: 500; color: #444; }
.seat-live { color: #9df5a8; font-weight: 600; }
.seat-bb { color: #fff; font-weight: 600; }
.seat-bb span:last-child { color: #ccc; }
.pot { margin-left: 12.500px; }
.pot-top { display: flex; gap: 9px; font-size: 15px; line-height: 17px; font-weight: 600; color: #888; }
.pot-top b { color: #fff; font-weight: 600; }
.pot-odds { display: flex; align-items: baseline; gap: 9px; margin-top: 4px; font-size: 12px; line-height: 17px; color: #888; }
.pot-odds b { font-size: 15.500px; font-weight: 600; color: #999; }

/* actions */
.actions { height: 204px; padding: 6px 5px; background: #1e1e1e; border-radius: 0 8px 8px 8px; }
.action-row { display: flex; gap: 5px; height: 162px; }
.action { flex: 1; display: flex; flex-direction: column; justify-content: space-between; padding: 8px 9px 5px 9px; border-radius: 5px; text-shadow: 1px 1px 2px rgba(0, 0, 0, .35); }
.a-call { background: #0ea706; }
.a-fold { background: #0b93cf; }
.a-name { font-size: 31px; line-height: 38px; color: #f5f5f5; }
.a-foot { display: flex; justify-content: space-between; align-items: flex-end; }
.a-pct { font-size: 49.500px; line-height: 48px; color: #f5f5f5; }
.a-combos { display: flex; flex-direction: column; align-items: flex-end; }
.a-combos b { font-size: 17px; line-height: 19px; font-weight: 500; color: #f5f5f5; }
.a-combos small { font-size: 12.500px; line-height: 15px; font-weight: 500; color: #c9e2ef; }
.a-call small { color: #cfe9cd; }
.split { height: 26px; margin-top: 4px; background: #0b93cf; border-radius: 5px; overflow: hidden; }
.split-g { display: block; height: 100%; background: #0ea706; }

/* hands */
.hands-panel { height: 279px; padding: 7px 6px 6px; background: #1e1e1e; border-radius: 0 8px 8px 8px; }
.hands { display: grid; grid-template-columns: repeat(3, 1fr); grid-template-rows: 132px 133px; gap: 1px; height: 266px; background: #111; border-radius: 5px; overflow: hidden; }
.hand { display: flex; flex-direction: column; padding-bottom: 2px; background: #0ea706; color: #0f140f; font-weight: 300; }
.hand-top { display: flex; justify-content: space-between; flex: 1; }
.tag { display: flex; gap: 3px; align-items: center; width: 65px; height: 24px; padding-left: 5px; background: #f5f5f5; border-radius: 0 0 5px 0; font-size: 16px; font-weight: 500; }
.tag span { display: flex; align-items: center; white-space: nowrap; }
.suit { display: inline-block; width: 14px; margin-left: 0; text-align: center; font-family: "DejaVu Sans", sans-serif; font-style: normal; font-size: 19px; line-height: 20px; }
.s { color: #4a4a4a; }
.h { color: #8e0a0a; }
.d { color: #2a3cd0; }
.k { color: #0f9a2e; }
.ev { margin: 9px 5px 0 0; font-size: 14px; line-height: 17px; font-weight: 400; }
.hand-row { display: flex; justify-content: space-between; padding: 0 4px 0 6px; font-size: 28px; line-height: 28.500px; }
```
